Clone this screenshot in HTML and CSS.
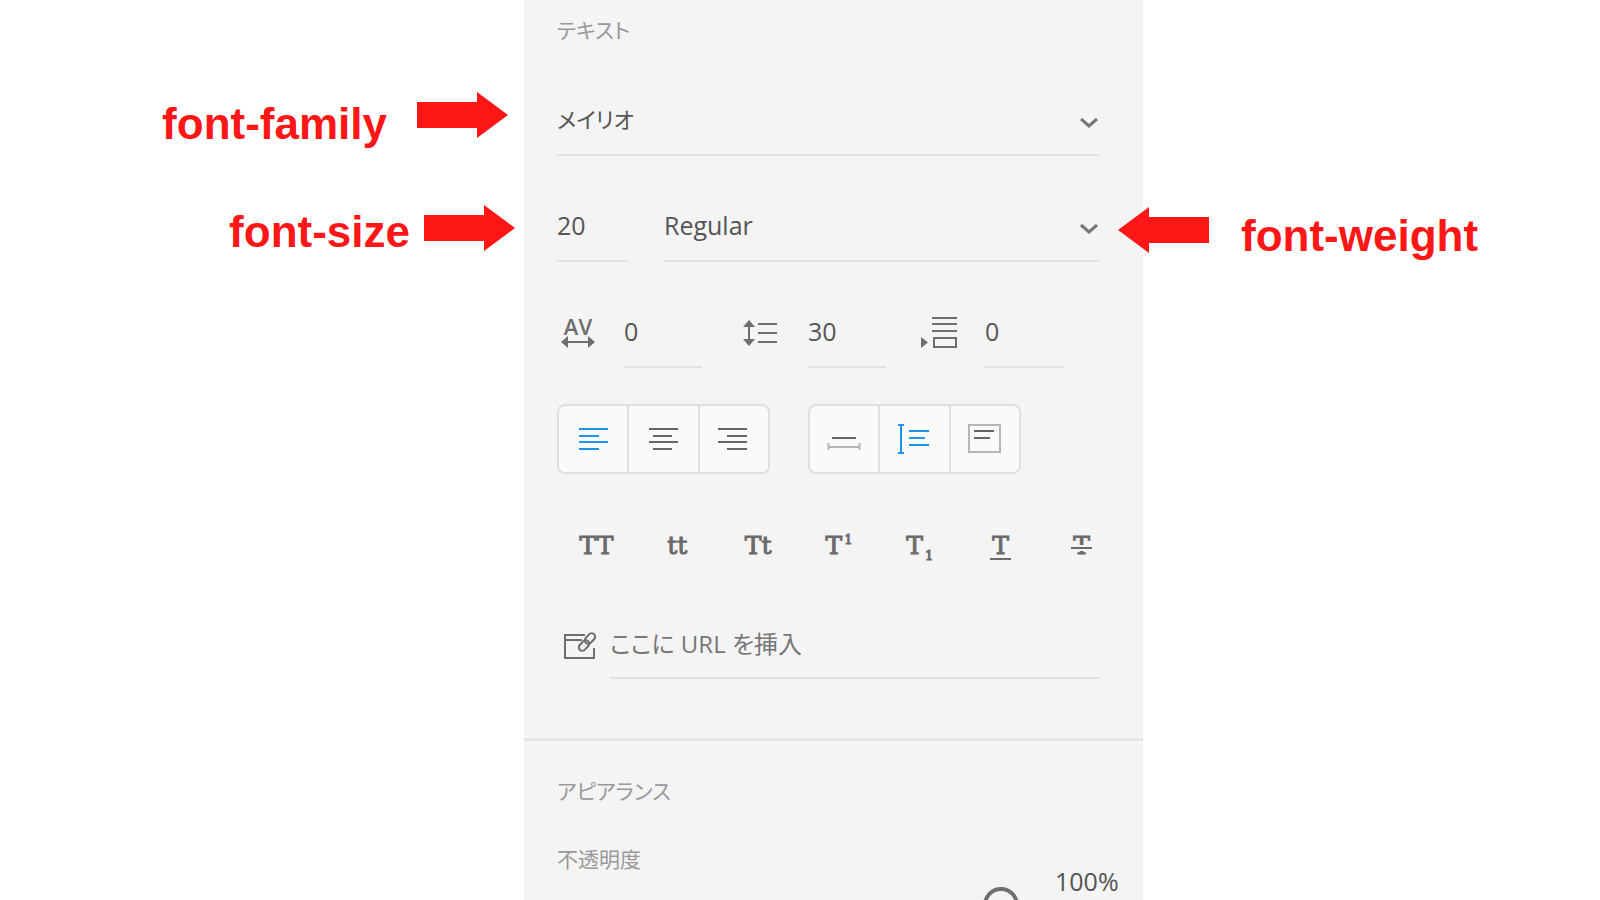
FILE: index.html
```html
<!DOCTYPE html>
<html lang="ja">
<head>
  <meta charset="UTF-8" />
  <title>テキスト</title>
  <meta name="viewport" content="width=device-width, initial-scale=1.0" />
  <link rel="stylesheet" href="styles.css">
</head>
<body>
  <div class="notes notes-left">
    <div class="note note-family">
      <span>font-family</span>
      <svg class="arrow" viewBox="0 0 91 46"><path d="M0 10h60V0l31 23-31 23V36H0z"/></svg>
    </div>
    <div class="note note-size">
      <span>font-size</span>
      <svg class="arrow" viewBox="0 0 91 46"><path d="M0 10h60V0l31 23-31 23V36H0z"/></svg>
    </div>
  </div>

  <main class="panel">
    <section class="text-section">
      <h2>テキスト</h2>

      <div class="row">
        <div class="select family">
          <select aria-label="フォント">
            <option>メイリオ</option>
          </select>
          <svg class="chevron" viewBox="0 0 20 12"><path d="M2 2l8 7 8-7"/></svg>
        </div>
      </div>

      <div class="row">
        <input class="field size" type="text" value="20" aria-label="サイズ">
        <div class="select">
          <select aria-label="太さ">
            <option>Regular</option>
          </select>
          <svg class="chevron" viewBox="0 0 20 12"><path d="M2 2l8 7 8-7"/></svg>
        </div>
      </div>

      <div class="spacing">
        <label>
          <svg class="icon" viewBox="0 0 44 36">
            <text x="21" y="19" text-anchor="middle">AV</text>
            <path class="line" d="M9 26h25"/>
            <path class="solid" d="M4 26l7-6v12zM38 26l-7-6v12z"/>
          </svg>
          <input class="field" type="text" value="0" aria-label="文字の間隔">
        </label>
        <label>
          <svg class="icon" viewBox="0 0 44 36">
            <path class="line" d="M8 9v18M17 8h19M17 17h19M17 26h19"/>
            <path class="solid" d="M8 4l6 7H2zM8 30l6-7H2z"/>
          </svg>
          <input class="field" type="text" value="30" aria-label="行送り">
        </label>
        <label>
          <svg class="icon" viewBox="0 0 44 36">
            <path class="line" d="M14 2h25M14 8h25M14 15h25M16 22h22v9H16z"/>
            <path class="solid" d="M3 21l7 5.500-7 5.500z"/>
          </svg>
          <input class="field" type="text" value="0" aria-label="段落の間隔">
        </label>
      </div>

      <div class="toolbars">
        <div class="group">
          <button class="active" aria-label="左揃え"><svg viewBox="0 0 34 34"><path d="M3 6h29M3 13h20M3 19h29M3 26h20"/></svg></button>
          <button aria-label="中央揃え"><svg viewBox="0 0 34 34"><path d="M3 6h29M7 13h19M3 19h29M7 26h19"/></svg></button>
          <button aria-label="右揃え"><svg viewBox="0 0 34 34"><path d="M1 6h29M10 13h20M1 19h29M10 26h20"/></svg></button>
        </div>
        <div class="group">
          <button aria-label="幅の自動調整"><svg viewBox="0 0 34 34"><path d="M5 15h24"/><path class="pale" d="M1 24h32M1.500 20v7M32.500 20v7"/></svg></button>
          <button class="active" aria-label="高さの自動調整"><svg viewBox="0 0 34 34"><path d="M4 2v28M1 2h6M1 30h6M12 8h20M12 15h16M12 22h20"/></svg></button>
          <button aria-label="固定サイズ"><svg viewBox="0 0 34 34"><path class="pale" d="M1 2h31v27H1z"/><path d="M6 8h20M6 15h16"/></svg></button>
        </div>
      </div>

      <div class="styles">
        <button aria-label="すべて大文字">TT</button>
        <button aria-label="すべて小文字">tt</button>
        <button aria-label="単語の先頭を大文字">Tt</button>
        <button aria-label="上付き">T<sup>1</sup></button>
        <button aria-label="下付き">T<sub>1</sub></button>
        <button aria-label="下線"><span class="underline">T</span></button>
        <button aria-label="取り消し線"><span class="strike">T</span></button>
      </div>

      <label class="url">
        <svg class="icon" viewBox="0 0 44 36">
          <path class="line" d="M28 8H8v23h29V21M8 13h17"/>
          <rect class="link" x="21" y="15" width="12" height="7" rx="3.500" transform="rotate(-48 27 18.500)"/>
          <rect class="link" x="27" y="8" width="12" height="7" rx="3.500" transform="rotate(-48 33 11.500)"/>
        </svg>
        <input class="field" type="text" placeholder="ここに URL を挿入" aria-label="URL">
      </label>
    </section>

    <section class="appearance">
      <h2>アピアランス</h2>
      <div class="opacity">
        <div>
          <label for="opacity">不透明度</label>
          <input type="range" id="opacity" min="0" max="100" value="100">
        </div>
        <output for="opacity">100%</output>
      </div>
    </section>
  </main>

  <div class="notes">
    <div class="note note-weight">
      <svg class="arrow" viewBox="0 0 91 46"><path d="M91 10H31V0L0 23l31 23V36h60z"/></svg>
      <span>font-weight</span>
    </div>
  </div>
</body>
</html>
```
FILE: styles.css
```css
* {
  box-sizing: border-box;
  margin: 0;
  padding: 0;
}

body {
  display: grid;
  grid-template-columns: 524fr 619px 457fr;
  height: 100vh;
  overflow: hidden;
  background-color: #fff;
  color: #555;
  font-family: "Open Sans", "Noto Sans CJK JP", sans-serif;
  font-feature-settings: "palt";
}

input,
select,
button {
  font: inherit;
  font-feature-settings: inherit;
  color: inherit;
  border: none;
  background: none;
}

svg {
  display: block;
  flex: none;
}

/* Red notes on both sides */
.notes {
  display: flex;
  flex-direction: column;
  padding-top: 92px;
  z-index: 1;
}

.notes-left {
  align-items: flex-end;
}

.note {
  display: flex;
  align-items: flex-start;
  color: #ff1616;
  font-family: "Liberation Sans", Arial, sans-serif;
  font-size: 44px;
  font-weight: bold;
  line-height: 50px;
  white-space: nowrap;
}

.arrow {
  width: 91px;
  height: 46px;
  fill: #ff1616;
}

.note-family {
  gap: 30px;
  margin-right: 16px;
}

.note-family span {
  padding-top: 7px;
}

.note-size {
  gap: 14px;
  margin-top: 56px;
  margin-right: 9px;
}

.note-size span {
  padding-top: 2px;
}

.note-weight {
  gap: 32px;
  margin-top: 115px;
  margin-left: -25px;
}

.note-weight span {
  padding-top: 4px;
}

/* Panel */
.panel {
  background-color: #f4f4f4;
}

.text-section {
  padding: 16px 44px 59px 33px;
  border-bottom: 3px solid #e5e5e5;
}

h2,
.opacity label {
  display: block;
  font-size: 21px;
  font-weight: normal;
  line-height: 28px;
  color: #999;
}

.row {
  display: flex;
  gap: 36px;
  margin-bottom: 32px;
}

h2 + .row {
  margin-top: 38px;
}

.field,
.select select {
  width: 100%;
  height: 74px;
  padding-top: 2px;
  border-bottom: 2px solid #e2e2e2;
  border-radius: 0;
  font-size: 25px;
  outline: none;
}

.size {
  width: 71px;
}

.select {
  position: relative;
  flex: 1;
}

.select select {
  display: block;
  appearance: none;
}

.family select {
  font-size: 22px;
}

.chevron {
  position: absolute;
  top: 35px;
  right: 0;
  width: 20px;
  height: 12px;
  fill: none;
  stroke: #777;
  stroke-width: 3;
  pointer-events: none;
}

.icon {
  width: 44px;
  height: 36px;
  overflow: visible;
}

.icon text {
  font-size: 22px;
  font-weight: 600;
  fill: #6e6e6e;
}

.line,
.link {
  fill: none;
  stroke: #6e6e6e;
  stroke-width: 2;
}

.solid {
  fill: #6e6e6e;
}

.spacing {
  display: grid;
  grid-template-columns: 184px 177px 1fr;
}

.spacing label {
  display: flex;
  align-items: center;
  gap: 23px;
}

.spacing .icon {
  margin-top: 6px;
}

.spacing .field {
  width: 78px;
}

.toolbars {
  display: flex;
  gap: 38px;
  margin-top: 36px;
}

.group {
  display: flex;
  width: 213px;
  height: 70px;
  border: 2px solid #dfdfdf;
  border-radius: 8px;
  background-color: #fafafa;
}

.group button {
  display: flex;
  flex: 1;
  align-items: center;
  justify-content: center;
  padding-top: 2px;
}

.group button + button {
  border-left: 2px solid #dfdfdf;
}

.group svg {
  width: 34px;
  height: 34px;
  fill: none;
  stroke: #666;
  stroke-width: 2;
}

.group .pale {
  stroke: #b5b5b5;
}

.group .active svg {
  stroke: #1c94ea;
}

.styles {
  display: grid;
  grid-template-columns: repeat(7, 1fr);
  margin: 46px -23px 39px -1px;
}

.styles button {
  height: 50px;
  font-family: "DejaVu Serif", serif;
  font-size: 25px;
  color: #6a6a6a;
  -webkit-text-stroke: 1px #6a6a6a;
}

.styles sup,
.styles sub {
  margin-left: 2px;
  font-size: 13px;
  line-height: 0;
}

.underline,
.strike {
  position: relative;
}

.underline::after,
.strike::after {
  content: "";
  position: absolute;
  left: -2px;
  right: -2px;
  bottom: 0;
  height: 2px;
  background-color: #6a6a6a;
}

.strike::after {
  bottom: 11px;
  box-shadow: 0 2px #f4f4f4, 0 -2px #f4f4f4;
}

.url {
  display: flex;
  align-items: center;
  gap: 9px;
}

.url .icon {
  margin-top: 2px;
}

.url .field {
  height: 70px;
  padding-top: 0;
  font-size: 24px;
}

.url .field::placeholder {
  color: #777;
  opacity: 1;
}

/* Appearance */
.appearance {
  padding: 36px 22px 0 33px;
}

.opacity {
  display: grid;
  grid-template-columns: 1fr 66px;
  gap: 36px;
  margin-top: 40px;
}

.opacity input {
  display: block;
  width: 100%;
  height: 36px;
  margin-top: 14px;
  appearance: none;
}

.opacity input::-webkit-slider-runnable-track {
  height: 4px;
  background-color: #707070;
}

.opacity input::-webkit-slider-thumb {
  appearance: none;
  width: 36px;
  height: 36px;
  margin-top: -16px;
  border: 4px solid #707070;
  border-radius: 50%;
  background-color: #f4f4f4;
}

.opacity output {
  padding-top: 20px;
  font-size: 25px;
  line-height: 32px;
}
```
